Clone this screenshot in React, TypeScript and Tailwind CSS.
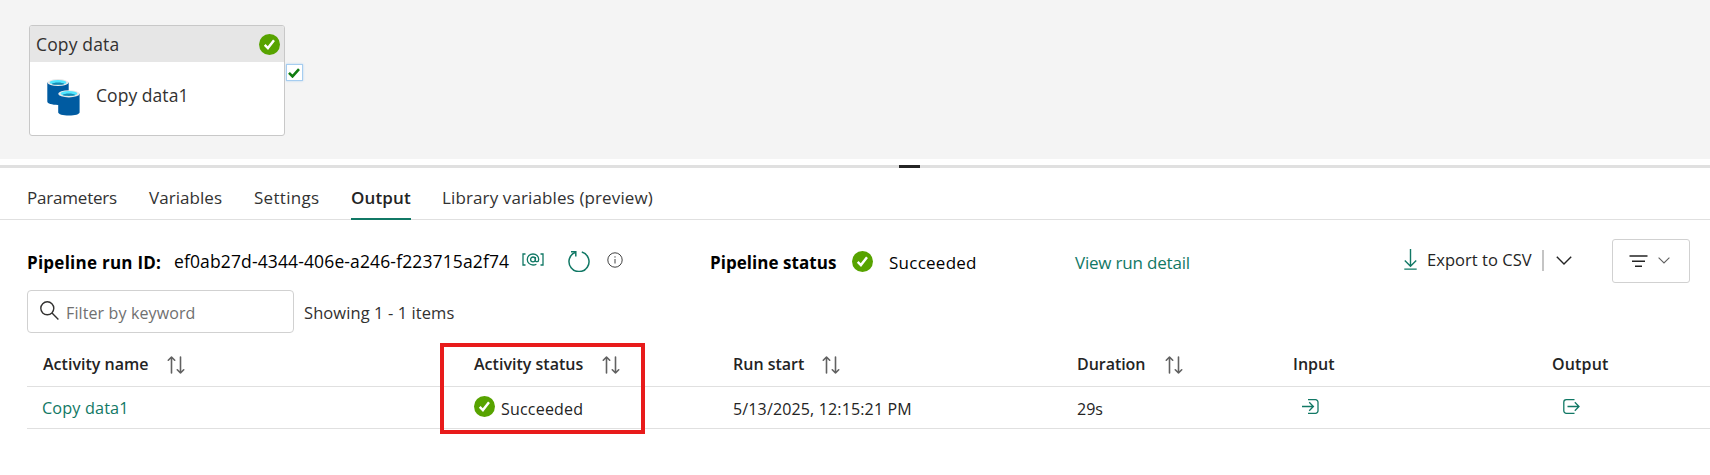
import type { ReactNode } from "react";

function SuccessIcon({ className = "" }: { className?: string }) {
  return (
    <svg viewBox="0 0 21 21" className={`h-[21px] w-[21px] shrink-0 ${className}`}>
      <circle cx="10.5" cy="10.5" r="10.5" fill="#57a300" />
      <path d="M5.7 10.9l3.2 3.2 6.1-7.9" fill="none" stroke="#fff" strokeWidth="2.4" />
    </svg>
  );
}

function SortIcon() {
  return (
    <svg viewBox="0 0 18 18" className="mt-[2px] h-[18px] w-[18px] shrink-0" fill="none" stroke="#616161" strokeWidth="1.6" strokeLinecap="round" strokeLinejoin="round">
      <path d="M4.5 17V1M1.3 4.2L4.5 1l3.2 3.2" />
      <path d="M13.5 1v16M10.3 13.8l3.2 3.2 3.2-3.2" />
    </svg>
  );
}

function DatabaseIcon() {
  return (
    <svg viewBox="0 0 33 37" className="h-[37px] w-[33px] shrink-0">
      <path d="M0.3 3.6v19c0 2 4.6 3.4 10.7 3.4s10.7-1.4 10.7-3.4v-19z" fill="#005ba1" />
      <ellipse cx="11" cy="3.6" rx="10.7" ry="3.5" fill="#e8e8e8" />
      <ellipse cx="11" cy="3.4" rx="8.4" ry="2.4" fill="#50e6ff" />
      <path d="M4.6 4.9c1.2-1 3.5-1.5 6.4-1.5s5.2.5 6.4 1.5c-1.4.6-3.8.9-6.4.9s-5-.3-6.4-.9z" fill="#198ab3" />
      <path d="M11.2 14.8v18.4c0 2 4.6 3.3 10.7 3.3s10.7-1.3 10.7-3.3V14.8z" fill="#005ba1" />
      <ellipse cx="21.9" cy="14.8" rx="10.7" ry="3.6" fill="#e8e8e8" />
      <ellipse cx="21.9" cy="14.6" rx="8.4" ry="2.5" fill="#50e6ff" />
      <path d="M15.5 16.1c1.2-1 3.5-1.5 6.4-1.5s5.2.5 6.4 1.5c-1.4.6-3.8.9-6.4.9s-5-.3-6.4-.9z" fill="#198ab3" />
    </svg>
  );
}

function Canvas() {
  return (
    <div className="flex h-[159px] items-start bg-[#f4f4f4] pl-[29px] pt-[25px]">
      <div className="h-[111px] w-[256px] overflow-hidden rounded-[3px] border border-[#c8c8c8] bg-white text-[17.5px] text-[#323130]">
        <div className="flex h-[36px] items-center justify-between bg-[#e6e6e6] pl-[6px] pr-[4px]">
          <span className="tracking-[0.15px]">Copy data</span>
          <SuccessIcon />
        </div>
        <div className="flex items-center pl-[17px] pt-[17px]">
          <DatabaseIcon />
          <span className="mb-[4px] ml-[16px] tracking-[0.05px]">Copy data1</span>
        </div>
      </div>
      <div className="mt-[39px] ml-px flex h-[17px] w-[17px] items-center justify-center border border-[#a6cdf0] bg-white shadow-[0_0_2px_#b5d5f2]">
        <svg viewBox="0 0 12 10" className="mr-px h-[10px] w-[12px]">
          <path d="M1 4.9l3.5 3.5L11 1.1" fill="none" stroke="#107c10" strokeWidth="2.6" />
        </svg>
      </div>
    </div>
  );
}

function Tabs() {
  return (
    <nav className="flex h-[52px] items-stretch border-b border-[#e0e0e0] pl-[27px] text-[17px] leading-[60px] text-[#323232]">
      <span className="w-[122px] tracking-[-0.2px]">Parameters</span>
      <span className="w-[105px] tracking-[0.05px]">Variables</span>
      <span className="w-[97px] tracking-[0.3px]">Settings</span>
      <span className="-mb-px h-[52px] w-[60px] border-b-2 border-[#117865] font-semibold tracking-[0.15px] text-[#242424]">Output</span>
      <span className="ml-[31px] tracking-[0.12px]">Library variables (preview)</span>
    </nav>
  );
}

function RunSummary() {
  return (
    <div className="mt-[19px] flex h-[44px] items-center pl-[27px] text-[17px] text-black">
      <span className="mt-[3px] w-[147px] font-bold tracking-[0.25px]">Pipeline run ID:</span>
      <span className="mt-[1px] w-[347px] text-[17.5px] tracking-[0.13px]">ef0ab27d-4344-406e-a246-f223715a2f74</span>
      <svg viewBox="0 0 22 13" className="mb-[4px] ml-[1px] h-[13px] w-[22px] shrink-0" fill="none" stroke="#117865" strokeWidth="1.3">
        <path d="M3.5 1H1v11h2.5M18.5 1H21v11h-2.5" />
        <circle cx="11" cy="6.4" r="2.4" />
        <path d="M13.4 4v3.4c0 1.8 3.3 1.9 3.3-1C16.7 3 14.2 1 11 1S5.3 3.2 5.3 6.4 7.8 12 11 12c1.4 0 2.5-.3 3.4-.8" />
      </svg>
      <svg viewBox="0 0 22 21" className="ml-[24px] h-[21px] w-[22px] shrink-0" fill="none" stroke="#117865" strokeWidth="1.5">
        <path d="M13.8 1A10 10 0 1 1 7.6 1.2" />
        <path d="M3 .8h4.8v4.8" />
      </svg>
      <svg viewBox="0 0 16 16" className="mb-[3px] ml-[17px] h-[16px] w-[16px] shrink-0" fill="none" stroke="#424242" strokeWidth="1">
        <circle cx="8" cy="8" r="7.2" />
        <path d="M8 7v4.5" />
        <circle cx="8" cy="4.9" r=".7" fill="#424242" stroke="none" />
      </svg>
      <span className="ml-[87px] mt-[3px] w-[142px] font-bold tracking-[0.05px]">Pipeline status</span>
      <SuccessIcon />
      <span className="ml-[16px] mt-[3px] w-[185px] tracking-[0.25px]">Succeeded</span>
      <span className="ml-[1px] mt-[3px] tracking-[-0.2px] text-[#117865]">View run detail</span>
      <div className="ml-auto flex items-center pr-[20px]">
        <svg viewBox="0 0 13 21" className="mb-[3px] h-[21px] w-[13px]" fill="none" stroke="#117865" strokeWidth="1.4">
          <path d="M6.5 0v17M.8 11.6l5.7 5.7 5.7-5.7M.3 20.1h12.4" />
        </svg>
        <span className="mb-[2px] ml-[10px] w-[115px] text-[16.5px] tracking-[0.05px] text-[#242424]">Export to CSV</span>
        <span className="mb-[1px] h-[21px] w-[2px] bg-[#c4c4c4]" />
        <svg viewBox="0 0 16 9" className="mb-[2px] ml-[12px] h-[9px] w-[16px]" fill="none" stroke="#242424" strokeWidth="1.4">
          <path d="M.8 .8L8 8l7.2-7.2" />
        </svg>
        <div className="ml-[40px] flex h-[44px] w-[78px] items-center rounded-[3px] border border-[#d1d1d1] pl-[16px]">
          <svg viewBox="0 0 19 12" className="h-[12px] w-[19px]" fill="none" stroke="#242424" strokeWidth="1.4">
            <path d="M.5 1h18M3 6.2h13M6 11.3h7" />
          </svg>
          <svg viewBox="0 0 12 7" className="mb-[2px] ml-[10px] h-[7px] w-[12px]" fill="none" stroke="#616161" strokeWidth="1.1">
            <path d="M.6 .6L6 6l5.4-5.4" />
          </svg>
        </div>
      </div>
    </div>
  );
}

function Filter() {
  return (
    <div className="mt-[7px] flex h-[43px] items-center pl-[27px] text-[#323130]">
      <div className="flex h-[43px] w-[267px] items-center rounded-[4px] border border-[#d1d1d1] pl-[12px]">
        <svg viewBox="0 0 19 19" className="mb-[2px] h-[19px] w-[19px]" fill="none" stroke="#323130" strokeWidth="1.4">
          <circle cx="7.3" cy="7.3" r="6.5" />
          <path d="M12 12l6.4 6.4" />
        </svg>
        <span className="ml-[7px] mt-[3px] text-[16px] tracking-[0.12px] text-[#707070]">Filter by keyword</span>
      </div>
      <span className="ml-[10px] mt-[3px] text-[16.5px] tracking-[0.08px]">Showing 1 - 1 items</span>
    </div>
  );
}

const cols = "grid grid-cols-[431px_259px_345px_216px_259px_1fr] items-center pl-[15px]";

function Head({ children, sort, className = "" }: { children: ReactNode; sort?: boolean; className?: string }) {
  return (
    <div className="flex items-center">
      <span className={className}>{children}</span>
      {sort && <SortIcon />}
    </div>
  );
}

function ActivityTable() {
  return (
    <div className="ml-[27px] text-[16px] text-[#242424]">
      <div className={`${cols} h-[54px] border-b border-[#e0e0e0] pt-[8px] font-semibold`}>
        <Head sort className="w-[125px] pl-px tracking-[0.02px]">Activity name</Head>
        <Head sort className="w-[129px] pl-px tracking-[0.02px]">Activity status</Head>
        <Head sort className="w-[90px] pl-px">Run start</Head>
        <Head sort className="w-[88px] tracking-[-0.05px]">Duration</Head>
        <Head>Input</Head>
        <Head className="tracking-[0.15px]">Output</Head>
      </div>
      <div className={`${cols} h-[42px] border-b border-[#e0e0e0]`}>
        <span className="mt-px text-[16.25px] tracking-[0.12px] text-[#117865]">Copy data1</span>
        <div className="flex items-center">
          <SuccessIcon className="mb-[2px] ml-px" />
          <span className="ml-[6px] mt-[2px] tracking-[0.2px]">Succeeded</span>
        </div>
        <span className="mt-[2px] pl-px tracking-[0.15px]">5/13/2025, 12:15:21 PM</span>
        <span className="mt-[2px]">29s</span>
        <svg viewBox="0 0 17 15" className="mb-[2px] ml-[9px] h-[15px] w-[17px]" fill="none" stroke="#117865" strokeWidth="1.3">
          <path d="M0 7.5h11.5M7.2 3.3l4.2 4.2-4.2 4.2M6 .7h7.5a2.5 2.5 0 0 1 2.5 2.5v8.6a2.5 2.5 0 0 1-2.5 2.5H6" />
        </svg>
        <svg viewBox="0 0 17 15" className="mb-[2px] ml-[11px] h-[15px] w-[17px]" fill="none" stroke="#117865" strokeWidth="1.3">
          <path d="M4.5 7.5H16M11.8 3.3L16 7.5l-4.2 4.2M11.5 .7H3.3A2.5 2.5 0 0 0 .8 3.2v8.6a2.5 2.5 0 0 0 2.5 2.5h8.2" />
        </svg>
      </div>
    </div>
  );
}

export default function App() {
  return (
    <div className="relative h-[475px] w-[1710px] overflow-hidden whitespace-nowrap bg-white font-['Open_Sans','Noto_Sans',sans-serif]">
      <Canvas />
      <div className="mt-[6px] flex h-[3px] bg-[#e0e0e0] pl-[899px]">
        <div className="w-[21px] bg-[#242424]" />
      </div>
      <Tabs />
      <RunSummary />
      <Filter />
      <ActivityTable />
      <div className="pointer-events-none absolute left-[440px] top-[343px] h-[91px] w-[205px] border-4 border-[#e81b1b]" />
    </div>
  );
}
